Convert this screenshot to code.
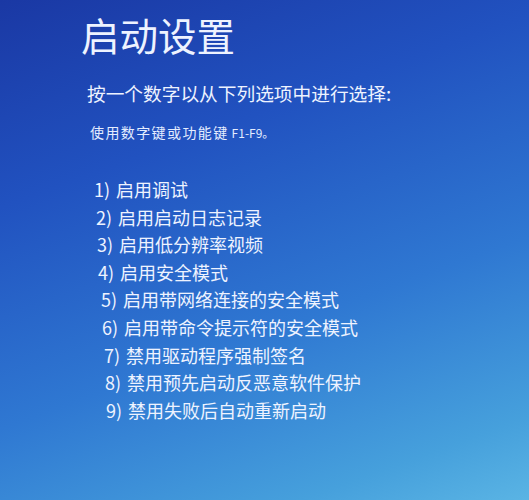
const options = [
  { n: 1, text: '启用调试', indent: 'ml-0' },
  { n: 2, text: '启用启动日志记录', indent: 'ml-[2px]' },
  { n: 3, text: '启用低分辨率视频', indent: 'ml-[3px]' },
  { n: 4, text: '启用安全模式', indent: 'ml-[4px]' },
  { n: 5, text: '启用带网络连接的安全模式', indent: 'ml-[7px]' },
  { n: 6, text: '启用带命令提示符的安全模式', indent: 'ml-[8px]' },
  { n: 7, text: '禁用驱动程序强制签名', indent: 'ml-[10px]' },
  { n: 8, text: '禁用预先启动反恶意软件保护', indent: 'ml-[11px]' },
  { n: 9, text: '禁用失败后自动重新启动', indent: 'ml-[12px]' },
]

export default function App() {
  return (
    <div
      className="w-[529px] h-[500px] overflow-hidden bg-[linear-gradient(160deg,#1a38a4_0%,#2152c0_30%,#2f78d2_62%,#46a0dc_88%,#5ab4e4_100%)] text-[#eef3ff]"
      style={{ fontFamily: '"Noto Sans CJK SC", "Noto Sans", sans-serif' }}
    >
      <div className="pl-[81px] pt-[9px]">
        <h1 className="text-[38.5px] leading-[50px] font-normal">启动设置</h1>
      </div>
      <div className="pl-[87px] pt-[21px]">
        <p className="text-[18.7px] leading-[26px]">按一个数字以从下列选项中进行选择:</p>
      </div>
      <div className="pl-[90px] pt-[16px]">
        <p className="text-[14px] leading-[20px] text-[#e4edff]">
          <span className="tracking-[1.4px]">使用数字键或功能键</span>
          <span className="ml-[3px] text-[12px]">F1-F9。</span>
        </p>
      </div>
      <ul className="pl-[94px] pt-[33px] text-[18px] leading-[27.6px]">
        {options.map((o) => (
          <li key={o.n} className={`${o.indent} whitespace-nowrap`}>
            <span className="mr-[6px]">{o.n})</span>
            {o.text}
          </li>
        ))}
      </ul>
    </div>
  )
}
